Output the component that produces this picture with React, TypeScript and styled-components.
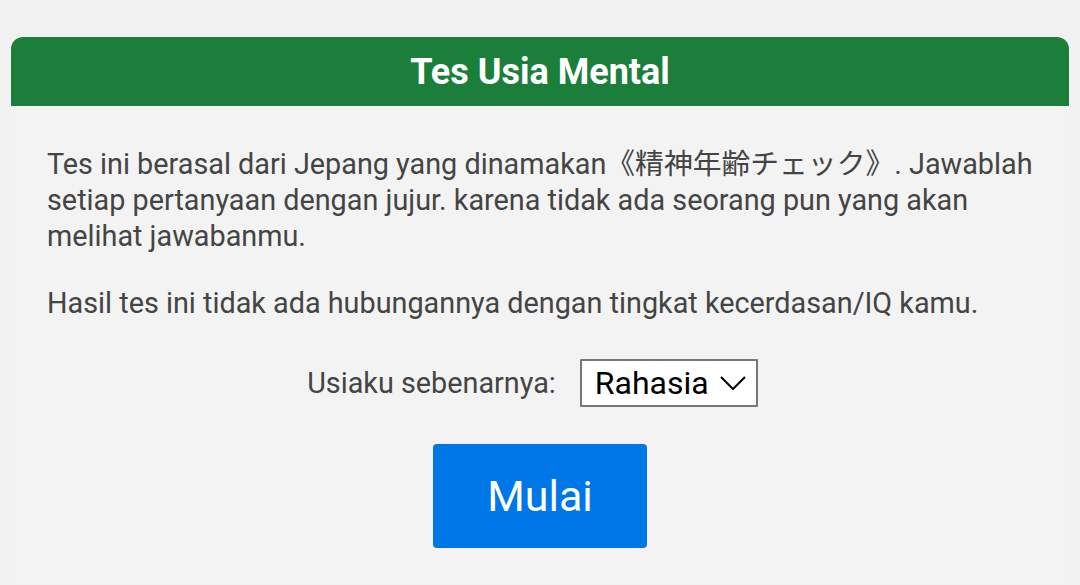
import styled, { createGlobalStyle } from 'styled-components';

const GlobalStyle = createGlobalStyle`
  html, body {
    margin: 0;
    padding: 0;
    background: #f2f2f2;
    font-family: Roboto, "Noto Sans CJK JP", sans-serif;
  }
`

const Card = styled.div`
  margin: 37px 11px 0 11px;
  width: 1058px;
  background: #f3f3f3;
`

const Header = styled.div`
  height: 69px;
  background: #1b7f3b;
  border-radius: 12px 12px 0 0;
  display: flex;
  align-items: center;
  justify-content: center;

  h1 {
    margin: 0;
    color: #ffffff;
    font-size: 36px;
    font-weight: 700;
  }
`

const Body = styled.div`
  padding: 40px 36px 36px 36px;
  color: #444444;
  font-size: 28.8px;
  line-height: 36px;

  p {
    margin: 0 0 31px 0;
  }
`

const AgeRow = styled.div`
  display: flex;
  align-items: center;
  justify-content: center;
  gap: 24px;
  margin-top: 38px;
  padding-right: 15px;

  label {
    color: #444444;
  }
`

const SelectWrap = styled.div`
  position: relative;
  display: flex;

  svg {
    position: absolute;
    right: 12px;
    top: 17px;
    pointer-events: none;
  }
`

const Select = styled.select`
  appearance: none;
  -webkit-appearance: none;
  width: 178px;
  height: 48px;
  border: 2px solid #777777;
  border-radius: 1px;
  background: #ffffff;
  color: #000000;
  font-family: Roboto, sans-serif;
  font-size: 32px;
  padding: 0 0 0 13px;
`

const StartButton = styled.button`
  display: block;
  margin: 37px auto 0 auto;
  width: 214px;
  height: 104px;
  border: none;
  border-radius: 4px;
  background: #0077e6;
  color: #ffffff;
  font-family: Roboto, sans-serif;
  font-size: 43px;
  cursor: pointer;
`

export default function App() {
  return (
    <>
      <GlobalStyle />
      <Card>
        <Header>
          <h1>Tes Usia Mental</h1>
        </Header>
        <Body>
          <p>
            Tes ini berasal dari Jepang yang dinamakan《精神年齢チェック》. Jawablah setiap pertanyaan dengan jujur. karena tidak ada seorang pun yang akan melihat jawabanmu.
          </p>
          <p>Hasil tes ini tidak ada hubungannya dengan tingkat kecerdasan/IQ kamu.</p>
          <AgeRow>
            <label htmlFor="age">Usiaku sebenarnya:</label>
            <SelectWrap>
              <Select id="age" defaultValue="rahasia">
                <option value="rahasia">Rahasia</option>
              </Select>
              <svg width="26" height="14" viewBox="0 0 26 14">
                <path d="M1 1 L13 13 L25 1" fill="none" stroke="#000" strokeWidth="2" />
              </svg>
            </SelectWrap>
          </AgeRow>
          <StartButton>Mulai</StartButton>
        </Body>
      </Card>
    </>
  )
}
